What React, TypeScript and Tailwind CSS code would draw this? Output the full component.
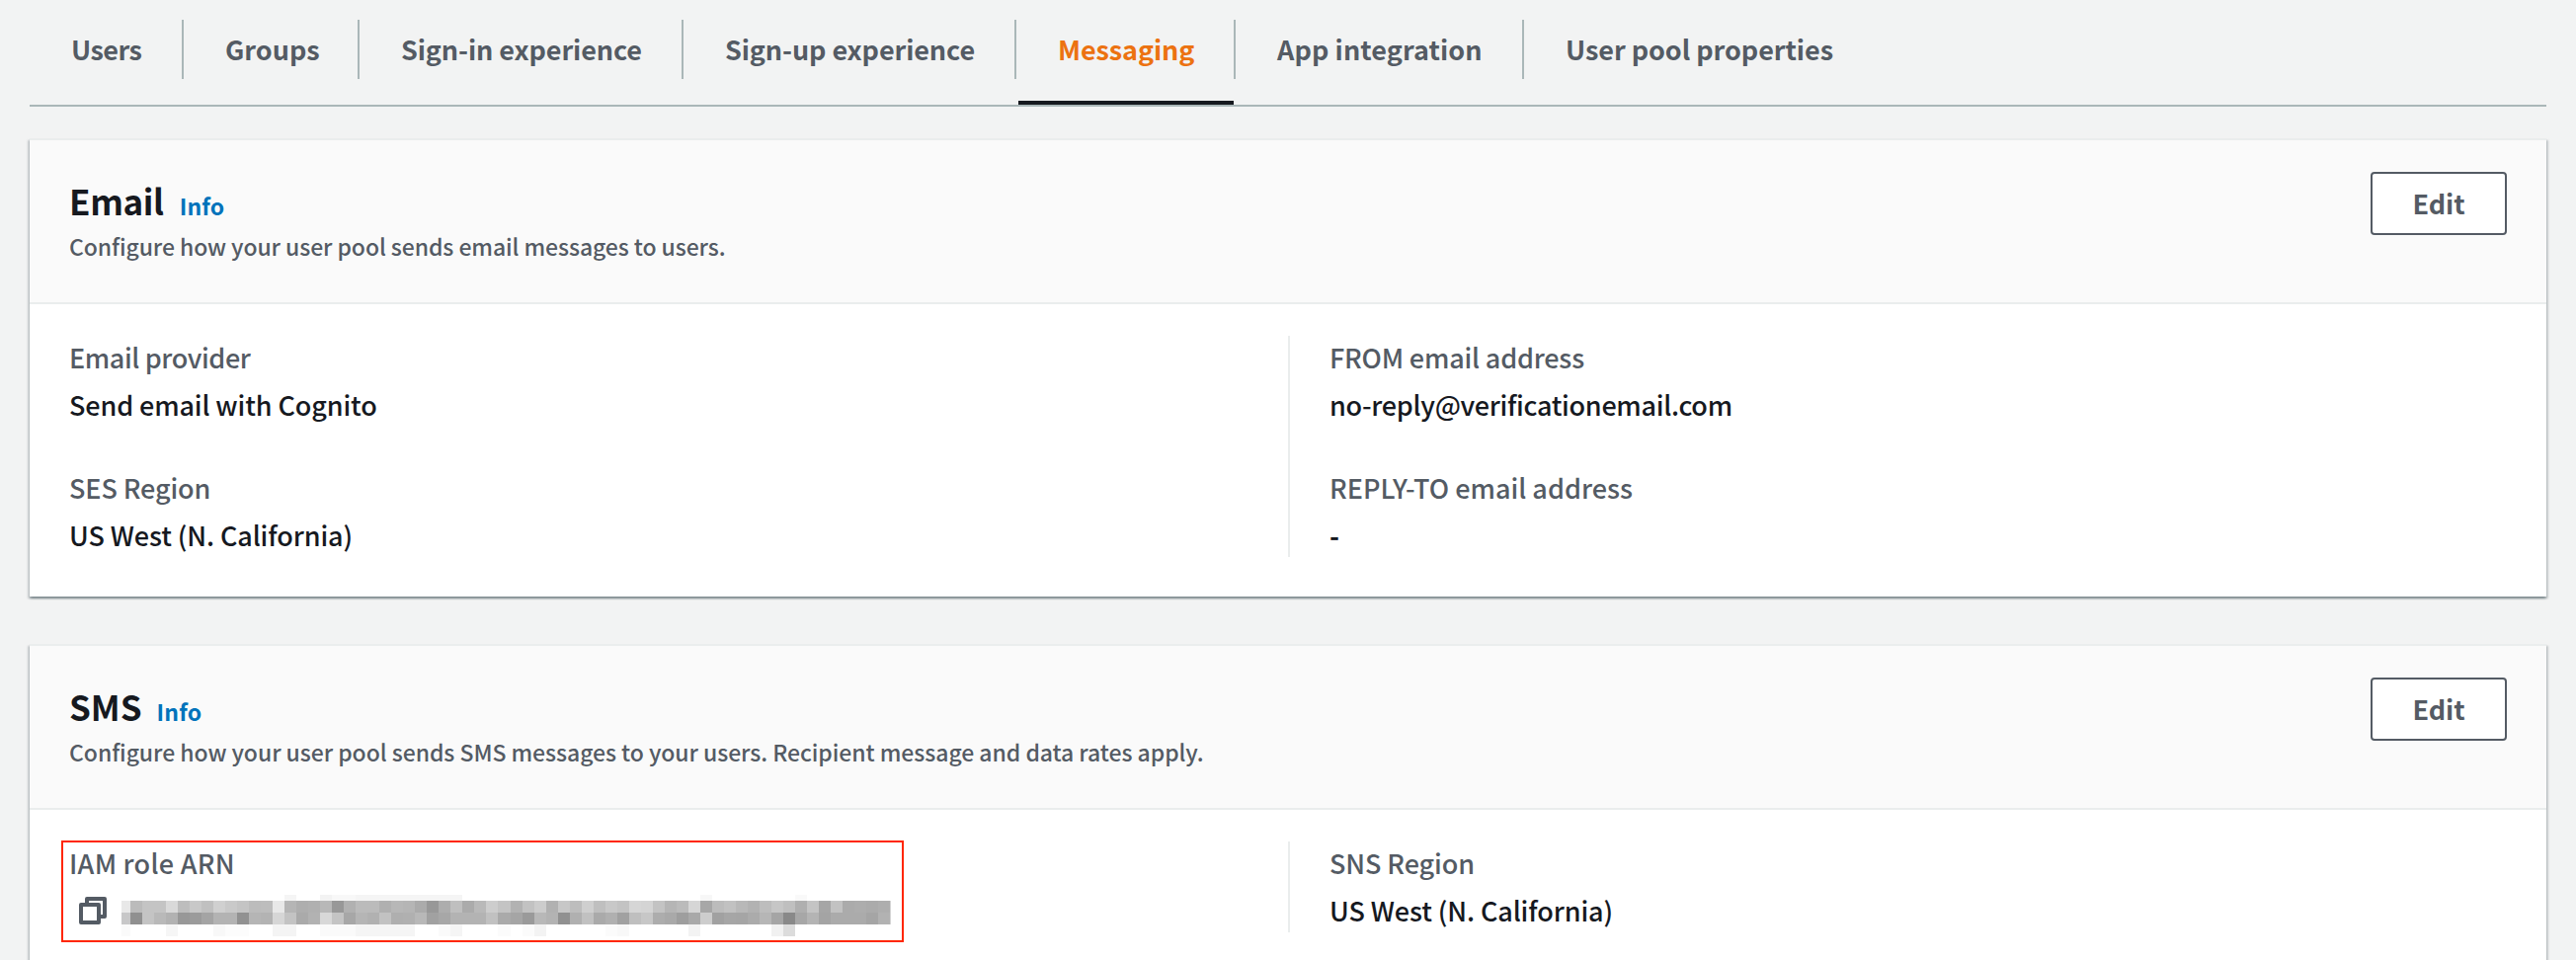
import type { ReactNode } from "react";

const tabs = [
  { label: "Users", box: "w-[156px]", text: "-tracking-[0.5px]" },
  { label: "Groups", box: "w-[178px]", text: "" },
  { label: "Sign-in experience", box: "w-[328px]", text: "-tracking-[0.1px]" },
  { label: "Sign-up experience", box: "w-[337px]", text: "-tracking-[0.1px]" },
  { label: "Messaging", box: "w-[222px]", text: "-tracking-[0.1px]", active: true },
  { label: "App integration", box: "w-[292px]", text: "tracking-[0.1px]" },
  { label: "User pool properties", box: "w-[330px]", text: "-tracking-[0.05px]", last: true },
];

const TOP = (
  "bb c4 c4 d9 bd c8 c0 d0 c9 c4 bc bd e8 b5 ae b0 b8 98 b1 bb bb b0 b7 b5 ab 98 ad bf ab b9 cd c4 " +
  "b2 c2 cc b1 c7 bd cf bf c8 c3 d6 d4 c3 b5 bb d6 a7 bc c1 b8 b2 bd c6 bf af c4 a6 c2 ab ad ab ae"
).split(" ");
const BOTTOM = (
  "90 c4 b9 b2 98 9b a4 b3 b3 91 b5 b3 d6 c3 aa b2 d8 c4 a7 b5 b1 c2 af b0 b8 a1 a7 b3 b3 b3 c1 aa " +
  "a5 9a b8 b3 91 b0 c1 aa b0 a1 bf c7 ad a9 9e a9 cd a1 a6 a5 ab b6 a5 89 a7 b4 a4 ab ab ab a5 b2"
).split(" ");
const ABOVE: [number, number, string][] = [
  [13, 1, "f5"], [16, 1, "f3"], [17, 2, "f8"], [19, 9, "f5"], [48, 1, "f7"], [56, 1, "f9"],
];
const BELOW: [number, number, string][] = [
  [3, 1, "f6"], [7, 1, "f8"], [8, 2, "fc"], [12, 2, "f4"], [16, 3, "fa"], [19, 5, "f5"], [26, 1, "fa"],
  [27, 1, "f5"], [31, 1, "fb"], [33, 1, "fb"], [34, 1, "f3"], [40, 1, "fb"], [41, 1, "f8"], [47, 1, "f3"],
  [54, 1, "f1"], [55, 1, "dc"],
];
const gray = (v: string) => `#${v}${v}${v}`;
const P = 12.016;

function Redacted() {
  return (
    <svg width="779" height="42" viewBox="0 0 779 42" shapeRendering="crispEdges" className="block shrink-0">
      <rect x="0" y="6" width="9" height="12" fill="#e8e8e8" />
      <rect x="0" y="18" width="9" height="12" fill="#c7c7c8" />
      <rect x="0" y="30" width="9" height="12" fill="#fafafa" />
      {TOP.map((v, i) => (
        <rect key={i} x={9 + i * P} y="6" width={P} height="12" fill={gray(v)} />
      ))}
      {BOTTOM.map((v, i) => (
        <rect key={i} x={9 + i * P} y="18" width={P} height="12" fill={gray(v)} />
      ))}
      {ABOVE.map(([i, n, v]) => (
        <rect key={i} x={9 + i * P} y="0" width={P * n} height="6" fill={gray(v)} />
      ))}
      {BELOW.map(([i, n, v]) => (
        <rect key={i} x={9 + i * P} y="30" width={P * n} height="12" fill={gray(v)} />
      ))}
      <rect x="778" y="6" width="1" height="24" fill="#d4d4d4" />
    </svg>
  );
}

function CopyIcon() {
  return (
    <svg width="28" height="28" viewBox="0 0 28 28" fill="none" stroke="#545b64" strokeWidth="4" strokeLinejoin="round" className="block shrink-0">
      <path d="M2 8h18v18H2z" />
      <path d="M8 7V2h18v18h-5" />
    </svg>
  );
}

function Tabs() {
  return (
    <nav className="flex h-[108px] border-b-2 border-[#aab7b8] pt-5">
      {tabs.map((t) => (
        <div key={t.label} className={`relative h-[86px] shrink-0 ${t.box}`}>
          <div className={`flex h-[60px] pl-[42px] ${t.last ? "" : "border-r-2 border-[#aab7b8]"}`}>
            <span
              className={`whitespace-nowrap text-[27px] leading-[60px] font-bold ${t.text} ${t.active ? "text-[#ec7211]" : "text-[#545b64]"}`}
            >
              {t.label}
            </span>
          </div>
          {t.active && <span className="absolute right-0.5 bottom-0 left-0.5 h-1 bg-[#16191f]" />}
        </div>
      ))}
    </nav>
  );
}

function Card({ title, titleClass, description, descriptionClass, children }: {
  title: string;
  titleClass: string;
  description: string;
  descriptionClass: string;
  children: ReactNode;
}) {
  return (
    <section className="border-t-2 border-[#eaeded] bg-white shadow-[0_2px_2px_0_rgba(0,28,36,0.3),2px_2px_2px_0_rgba(0,28,36,0.15),-2px_2px_2px_0_rgba(0,28,36,0.15)]">
      <header className="flex h-[166px] items-start justify-between border-b-2 border-[#eaeded] bg-[#fafafa] px-10 pt-8">
        <div className="pt-[7px]">
          <div className="flex h-[44px] items-baseline">
            <h2 className={`text-[35px] leading-[44px] font-bold text-[#16191f] ${titleClass}`}>{title}</h2>
            <a className="text-[23px] leading-[44px] font-bold tracking-[0.2px] text-[#0073bb]">Info</a>
          </div>
          <p className={`mt-1.5 whitespace-nowrap text-[23px] leading-9 font-medium text-[#545b64] ${descriptionClass}`}>{description}</p>
        </div>
        <button className="flex h-16 w-[138px] items-center justify-center rounded-[4px] border-2 border-[#545b64] bg-white text-[27px] leading-[60px] font-bold text-[#545b64]">
          Edit
        </button>
      </header>
      <div className="grid grid-cols-2 pt-8 pb-10">{children}</div>
    </section>
  );
}

function Field({ label, labelClass = "", children }: { label: string; labelClass?: string; children: ReactNode }) {
  return (
    <div className="h-[92px] whitespace-nowrap text-[27px] leading-[44px] font-medium">
      <div className={`mb-1 text-[#545b64] ${labelClass}`}>{label}</div>
      {children}
    </div>
  );
}

function Value({ className = "", children }: { className?: string; children: ReactNode }) {
  return <div className={`text-[#16191f] ${className}`}>{children}</div>;
}

export default function App() {
  return (
    <div className="h-[972px] overflow-hidden bg-[#f2f3f3] px-[30px] font-['Noto_Sans_CJK_SC',sans-serif]">
      <Tabs />
      <main className="mt-8 flex flex-col gap-12">
        <Card
          title="Email"
          titleClass="mr-[16px] -tracking-[0.4px]"
          description="Configure how your user pool sends email messages to users."
          descriptionClass="-tracking-[0.09px]"
        >
          <div className="flex flex-col gap-10 pl-10">
            <Field label="Email provider" labelClass="-tracking-[0.4px]">
              <Value className="-tracking-[0.13px]">Send email with Cognito</Value>
            </Field>
            <Field label="SES Region" labelClass="-tracking-[0.1px]">
              <Value className="-tracking-[0.1px]">US West (N. California)</Value>
            </Field>
          </div>
          <div className="flex flex-col gap-10 border-l-2 border-[#eaeded] pl-10">
            <Field label="FROM email address" labelClass="-tracking-[0.2px]">
              <Value className="-tracking-[0.3px]">no-reply@verificationemail.com</Value>
            </Field>
            <Field label="REPLY-TO email address">
              <Value className="font-bold">-</Value>
            </Field>
          </div>
        </Card>
        <Card
          title="SMS"
          titleClass="mr-[15px]"
          description="Configure how your user pool sends SMS messages to your users. Recipient message and data rates apply."
          descriptionClass="-tracking-[0.06px]"
        >
          <div className="relative pl-10">
            <div className="absolute -top-[1px] left-8 h-[103px] w-[853px] border-2 border-[#ff2600]" />
            <Field label="IAM role ARN" labelClass="tracking-[0.25px]">
              <div className="flex items-start pt-1.5 pl-2.5">
                <div className="mt-0.5 mr-[15px]">
                  <CopyIcon />
                </div>
                <Redacted />
              </div>
            </Field>
          </div>
          <div className="border-l-2 border-[#eaeded] pl-10">
            <Field label="SNS Region" labelClass="-tracking-[0.1px]">
              <Value className="-tracking-[0.1px]">US West (N. California)</Value>
            </Field>
          </div>
        </Card>
      </main>
    </div>
  );
}
